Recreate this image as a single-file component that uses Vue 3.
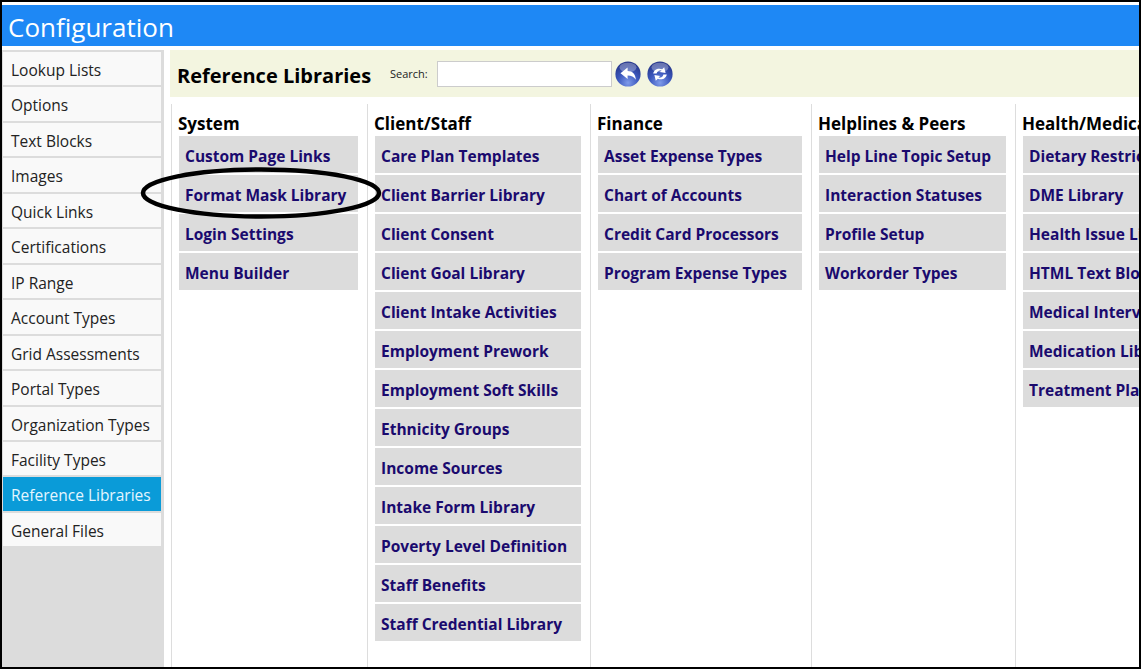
<script setup>
const sideItems = [
  'Lookup Lists', 'Options', 'Text Blocks', 'Images', 'Quick Links', 'Certifications', 'IP Range',
  'Account Types', 'Grid Assessments', 'Portal Types', 'Organization Types', 'Facility Types',
  'Reference Libraries', 'General Files'
]

const columns = [
  { title: 'System', links: ['Custom Page Links', 'Format Mask Library', 'Login Settings', 'Menu Builder'] },
  {
    title: 'Client/Staff',
    links: [
      'Care Plan Templates', 'Client Barrier Library', 'Client Consent', 'Client Goal Library',
      'Client Intake Activities', 'Employment Prework', 'Employment Soft Skills', 'Ethnicity Groups',
      'Income Sources', 'Intake Form Library', 'Poverty Level Definition', 'Staff Benefits',
      'Staff Credential Library'
    ]
  },
  { title: 'Finance', links: ['Asset Expense Types', 'Chart of Accounts', 'Credit Card Processors', 'Program Expense Types'] },
  { title: 'Helplines & Peers', links: ['Help Line Topic Setup', 'Interaction Statuses', 'Profile Setup', 'Workorder Types'] },
  {
    title: 'Health/Medical',
    links: [
      'Dietary Restrictions', 'DME Library', 'Health Issue Library', 'HTML Text Blocks',
      'Medical Interventions', 'Medication Library', 'Treatment Plans'
    ]
  }
]
</script>

<template>
  <div class="frame">
    <div class="titleBar">Configuration</div>
    <div class="body">
      <nav class="sidebar">
        <a
          v-for="item in sideItems"
          :key="item"
          class="sideItem"
          :class="{ active: item === 'Reference Libraries' }"
        >{{ item }}</a>
      </nav>

      <main class="content">
        <div class="header">
          <h1>Reference Libraries</h1>
          <label class="searchLabel">Search:</label>
          <input class="searchBox" type="text" />
          <button class="roundBtn" aria-label="Back">
            <svg width="26" height="26" viewBox="0 0 26 26">
              <defs>
                <radialGradient id="orbA" cx="50%" cy="85%" r="75%">
                  <stop offset="0" stop-color="#7f9bea" />
                  <stop offset="0.55" stop-color="#3b57bd" />
                  <stop offset="1" stop-color="#28398f" />
                </radialGradient>
              </defs>
              <circle cx="13" cy="13" r="12.6" fill="url(#orbA)" />
              <ellipse cx="13" cy="6.5" rx="8.5" ry="4.8" fill="#fff" opacity="0.3" />
              <path d="M5.5 12.2 L12.6 6.4 V10 C17.5 10 20.6 13 20.8 18.8 C18.8 15.6 16.4 14.6 12.6 14.6 V18 Z" fill="#fff" />
            </svg>
          </button>
          <button class="roundBtn" aria-label="Refresh">
            <svg width="26" height="26" viewBox="0 0 26 26">
              <defs>
                <radialGradient id="orbB" cx="50%" cy="85%" r="75%">
                  <stop offset="0" stop-color="#7f9bea" />
                  <stop offset="0.55" stop-color="#3b57bd" />
                  <stop offset="1" stop-color="#28398f" />
                </radialGradient>
              </defs>
              <circle cx="13" cy="13" r="12.6" fill="url(#orbB)" />
              <ellipse cx="13" cy="6.5" rx="8.5" ry="4.8" fill="#fff" opacity="0.3" />
              <path d="M6.2 12.6 C6.8 8.8 10.8 6.6 15.2 8.2 L17.2 6.2 L18.6 12 L12.8 11 L14.6 9.4 C12.2 8.8 10.2 10.2 9.6 12.6 Z" fill="#fff" />
              <path d="M19.8 13.4 C19.2 17.2 15.2 19.4 10.8 17.8 L8.8 19.8 L7.4 14 L13.2 15 L11.4 16.6 C13.8 17.2 15.8 15.8 16.4 13.4 Z" fill="#fff" />
            </svg>
          </button>
        </div>

        <div class="columns">
          <section v-for="col in columns" :key="col.title" class="column">
            <h2>{{ col.title }}</h2>
            <a v-for="link in col.links" :key="link" class="libLink">{{ link }}</a>
          </section>
        </div>
      </main>
    </div>

    <!-- hand drawn annotation over the screenshot -->
    <svg class="circleMark" width="244" height="56" viewBox="0 0 244 56">
      <ellipse cx="122" cy="28" rx="118" ry="23.5" fill="none" stroke="#000" stroke-width="4.5" />
    </svg>
  </div>
</template>

<style scoped>
.frame {
  position: relative;
  box-sizing: border-box;
  width: 1141px;
  height: 669px;
  border: 2px solid #000;
  padding-top: 3px;
  background: #fff;
  overflow: hidden;
  font-family: "Open Sans", "Noto Sans", sans-serif;
  display: flex;
  flex-direction: column;
}

.titleBar {
  height: 41px;
  flex: none;
  background: #1e88f5;
  color: #fff;
  font-size: 26px;
  line-height: 45px;
  padding-left: 6px;
}

.body {
  flex: 1;
  display: flex;
  min-height: 0;
  padding-top: 4px;
}

.sidebar {
  width: 162px;
  flex: none;
  background: #dcdcdc;
  padding: 2px 3px 0 1px;
  box-sizing: border-box;
}

.sideItem {
  display: block;
  height: 33.46px;
  line-height: 36px;
  margin-bottom: 2px;
  padding-left: 8px;
  background: #f9f9f9;
  color: #222;
  font-size: 15.5px;
}

.sideItem.active {
  background: #0a9bd8;
  color: #e4f6ff;
}

.content {
  flex: 1;
  min-width: 0;
  margin-left: 6px;
}

.header {
  height: 47px;
  background: #f3f5e0;
  display: flex;
  align-items: center;
  padding-left: 7px;
}

h1 {
  margin: 0;
  font-size: 20px;
  font-weight: 700;
  color: #000;
  width: 213px;
  white-space: nowrap;
  position: relative;
  top: 2px;
}

.searchLabel {
  font-size: 11px;
  color: #222;
  width: 47px;
}

.searchBox {
  box-sizing: border-box;
  width: 175px;
  height: 26px;
  border: 1px solid #ccc;
  background: #fff;
  padding: 0;
  margin-right: 3px;
}

.roundBtn {
  width: 26px;
  height: 26px;
  padding: 0;
  border: 0;
  margin-right: 6px;
  background: transparent;
  display: block;
}

.columns {
  display: grid;
  grid-template-columns: 196px 223px 221px 204px 300px;
  margin: 7px 0 0 1px;
  height: 563px;
}

.column {
  border-left: 1px solid #ddd;
  padding: 8px 9px 0 7px;
  box-sizing: border-box;
  min-width: 0;
}

.column:last-child {
  padding-right: 0;
}

h2 {
  margin: 0 0 1px -1px;
  font-size: 17px;
  line-height: 23px;
  font-weight: 700;
  color: #000;
  white-space: nowrap;
}

.libLink {
  display: block;
  height: 37px;
  line-height: 40px;
  margin-bottom: 2px;
  padding-left: 6px;
  background: #dcdcdc;
  color: #1a0a6e;
  font-size: 15.5px;
  font-weight: 700;
  white-space: nowrap;
  overflow: hidden;
}

.circleMark {
  position: absolute;
  left: 137px;
  top: 163px;
}
</style>
